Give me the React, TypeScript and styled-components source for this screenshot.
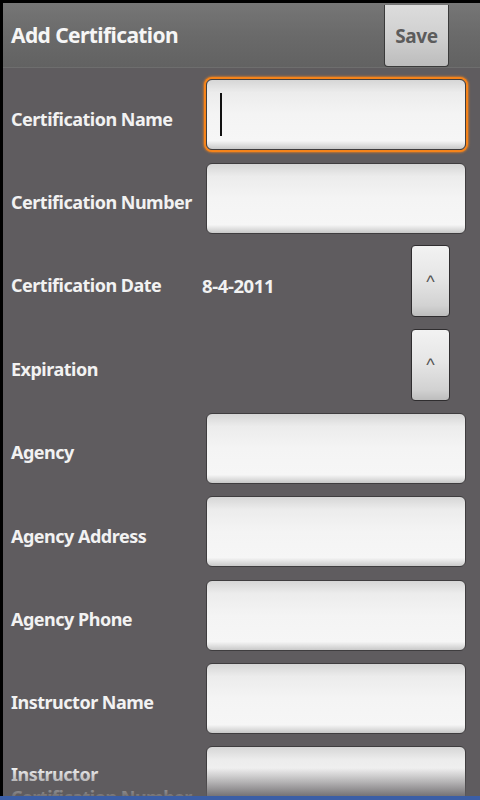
import React from "react";
import styled, { createGlobalStyle } from "styled-components";

const Global = createGlobalStyle`
  html, body { margin: 0; padding: 0; background: #000; }
  * { box-sizing: border-box; }
`;

const Screen = styled.div`
  position: relative;
  width: 480px;
  height: 800px;
  overflow: hidden;
  background: #000;
  padding: 3px 0 0 3px;
  font-family: "Noto Sans", "Open Sans", "DejaVu Sans", sans-serif;
  display: flex;
  flex-direction: column;
`;

const Header = styled.div`
  height: 65px;
  flex: none;
  display: flex;
  align-items: center;
  justify-content: space-between;
  padding: 0 31px 0 8px;
  background: linear-gradient(#767676, #6a6a6a 50%, #626262);
  border-bottom: 1px solid #6e6e6e;
`;

const Title = styled.div`
  color: #f6f6f6;
  font-size: 21px;
  font-weight: 700;
  letter-spacing: -0.6px;
`;

const SaveButton = styled.div`
  width: 65px;
  height: 62px;
  margin-top: 2px;
  display: flex;
  align-items: center;
  justify-content: center;
  border: 1px solid #3a3a3a;
  border-top: none;
  border-radius: 0 0 4px 4px;
  background: linear-gradient(#dcdcdc, #cfcfcf 55%, #bcbcbc);
  color: #5c5c5c;
  font-size: 19px;
  font-weight: 700;
  letter-spacing: -0.4px;
`;

const Body = styled.div`
  flex: 1;
  background: #5f5c5f;
  padding-top: 5px;
  display: flex;
  flex-direction: column;
`;

const Row = styled.div`
  height: 83.4px;
  flex: none;
  display: grid;
  grid-template-columns: 199px 1fr;
  align-items: center;
`;

const Label = styled.div`
  padding-left: 8px;
  color: #f2f2f2;
  font-size: 18px;
  font-weight: 700;
  letter-spacing: -0.5px;
  line-height: 23px;
  padding-top: 9px;
`;

const InputBox = styled.div<{ $focused?: boolean }>`
  margin: 0 14px 0 4px;
  height: 71px;
  border-radius: 6px;
  position: relative;
  background: linear-gradient(#d6d6d6, #ececec 18%, #f4f4f4 50%, #f6f6f6 88%, #c9c9c9);
  border: 1px solid #3f3d3f;
  box-shadow: ${(p) =>
    p.$focused ? "0 0 0 2px #f5831a, 0 0 2px 3px rgba(245,131,26,0.6)" : "none"};
  display: flex;
  align-items: center;
  padding-left: 13px;
`;

const Cursor = styled.div`
  width: 2px;
  height: 43px;
  background: #111;
`;

const DateCell = styled.div`
  display: flex;
  align-items: center;
  justify-content: space-between;
  padding-right: 30px;
`;

const DateValue = styled.div`
  color: #f2f2f2;
  font-size: 18.5px;
  font-weight: 700;
  letter-spacing: -0.4px;
  padding-top: 8px;
`;

const SpinButton = styled.div`
  width: 39px;
  height: 72px;
  border: 1px solid #2f2d2f;
  border-radius: 4px;
  background: linear-gradient(#f2f2f2, #e6e6e6 45%, #d2d2d2 85%, #bdbdbd);
  display: flex;
  align-items: center;
  justify-content: center;
  color: #555;
  font-family: "Liberation Sans", sans-serif;
  font-size: 18px;
  padding-top: 2px;
`;

const Fade = styled.div`
  position: absolute;
  left: 3px;
  right: 0;
  bottom: 4px;
  height: 28px;
  background: linear-gradient(rgba(95, 92, 95, 0), rgba(95, 92, 95, 0.85));
  pointer-events: none;
`;

const BottomBar = styled.div`
  position: absolute;
  left: 0;
  right: 0;
  bottom: 0;
  height: 4px;
  background: #3b5ea6;
`;

const fields = ["Agency", "Agency Address", "Agency Phone", "Instructor Name"];

export default function App() {
  return (
    <Screen>
      <Global />
      <Header>
        <Title>Add Certification</Title>
        <SaveButton>Save</SaveButton>
      </Header>
      <Body>
        <Row>
          <Label>Certification Name</Label>
          <InputBox $focused>
            <Cursor />
          </InputBox>
        </Row>
        <Row>
          <Label>Certification Number</Label>
          <InputBox />
        </Row>
        <Row>
          <Label>Certification Date</Label>
          <DateCell>
            <DateValue>8-4-2011</DateValue>
            <SpinButton>^</SpinButton>
          </DateCell>
        </Row>
        <Row>
          <Label>Expiration</Label>
          <DateCell>
            <DateValue />
            <SpinButton>^</SpinButton>
          </DateCell>
        </Row>
        {fields.map((f) => (
          <Row key={f}>
            <Label>{f}</Label>
            <InputBox />
          </Row>
        ))}
        <Row>
          <Label>
            Instructor
            <br />
            Certification Number
          </Label>
          <InputBox />
        </Row>
      </Body>
      <Fade />
      <BottomBar />
    </Screen>
  );
}
